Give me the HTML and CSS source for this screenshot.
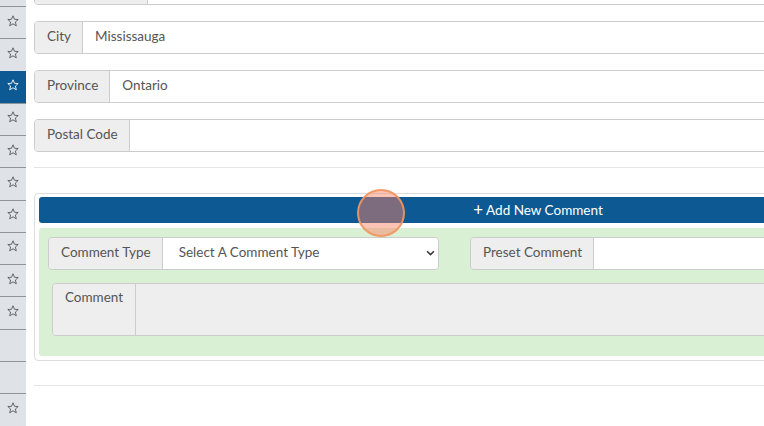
FILE: index.html
```html
<!DOCTYPE html>
<html>
<head>
<meta charset="utf-8">
<link rel="stylesheet" href="styles.css">
</head>
<body>
<div class="page">
  <aside class="sidebar">
    <div class="srow"><svg class="star" viewBox="0 0 12 12"><polygon points="6,0.8 7.5,4.3 11.2,4.5 8.4,7 9.3,10.8 6,8.8 2.7,10.8 3.6,7 0.8,4.5 4.5,4.3"/></svg></div>
    <div class="srow"><svg class="star" viewBox="0 0 12 12"><polygon points="6,0.8 7.5,4.3 11.2,4.5 8.4,7 9.3,10.8 6,8.8 2.7,10.8 3.6,7 0.8,4.5 4.5,4.3"/></svg></div>
    <div class="srow active"><svg class="star" viewBox="0 0 12 12"><polygon points="6,0.8 7.5,4.3 11.2,4.5 8.4,7 9.3,10.8 6,8.8 2.7,10.8 3.6,7 0.8,4.5 4.5,4.3"/></svg></div>
    <div class="srow"><svg class="star" viewBox="0 0 12 12"><polygon points="6,0.8 7.5,4.3 11.2,4.5 8.4,7 9.3,10.8 6,8.8 2.7,10.8 3.6,7 0.8,4.5 4.5,4.3"/></svg></div>
    <div class="srow"><svg class="star" viewBox="0 0 12 12"><polygon points="6,0.8 7.5,4.3 11.2,4.5 8.4,7 9.3,10.8 6,8.8 2.7,10.8 3.6,7 0.8,4.5 4.5,4.3"/></svg></div>
    <div class="srow"><svg class="star" viewBox="0 0 12 12"><polygon points="6,0.8 7.5,4.3 11.2,4.5 8.4,7 9.3,10.8 6,8.8 2.7,10.8 3.6,7 0.8,4.5 4.5,4.3"/></svg></div>
    <div class="srow"><svg class="star" viewBox="0 0 12 12"><polygon points="6,0.8 7.5,4.3 11.2,4.5 8.4,7 9.3,10.8 6,8.8 2.7,10.8 3.6,7 0.8,4.5 4.5,4.3"/></svg></div>
    <div class="srow"><svg class="star" viewBox="0 0 12 12"><polygon points="6,0.8 7.5,4.3 11.2,4.5 8.4,7 9.3,10.8 6,8.8 2.7,10.8 3.6,7 0.8,4.5 4.5,4.3"/></svg></div>
    <div class="srow"><svg class="star" viewBox="0 0 12 12"><polygon points="6,0.8 7.5,4.3 11.2,4.5 8.4,7 9.3,10.8 6,8.8 2.7,10.8 3.6,7 0.8,4.5 4.5,4.3"/></svg></div>
    <div class="srow"><svg class="star" viewBox="0 0 12 12"><polygon points="6,0.8 7.5,4.3 11.2,4.5 8.4,7 9.3,10.8 6,8.8 2.7,10.8 3.6,7 0.8,4.5 4.5,4.3"/></svg></div>
    <div class="srow"></div>
    <div class="srow"></div>
    <div class="srow"><svg class="star" viewBox="0 0 12 12"><polygon points="6,0.8 7.5,4.3 11.2,4.5 8.4,7 9.3,10.8 6,8.8 2.7,10.8 3.6,7 0.8,4.5 4.5,4.3"/></svg></div>
  </aside>

  <main class="main">
    <div class="igroup">
      <span class="addon w-top"></span>
      <div class="field"></div>
    </div>
    <div class="igroup">
      <span class="addon">City</span>
      <div class="field">Mississauga</div>
    </div>
    <div class="igroup">
      <span class="addon">Province</span>
      <div class="field">Ontario</div>
    </div>
    <div class="igroup">
      <span class="addon">Postal Code</span>
      <div class="field"></div>
    </div>

    <hr class="rule rule-a">

    <section class="card">
      <button class="btn-add" type="button"><span class="plus">+</span> Add New Comment</button>
      <div class="green">
        <div class="row">
          <div class="igroup small ctype">
            <span class="addon">Comment Type</span>
            <div class="field select">Select A Comment Type
              <svg class="chev" viewBox="0 0 10 6"><polyline points="1.2,1 5,4.8 8.8,1"/></svg>
            </div>
          </div>
          <div class="igroup small preset">
            <span class="addon">Preset Comment</span>
            <div class="field"></div>
          </div>
        </div>
        <div class="igroup comment">
          <span class="addon top">Comment</span>
          <div class="field area"></div>
        </div>
      </div>
    </section>

    <hr class="rule rule-b">
  </main>
</div>
<div class="cursor"></div>
</body>
</html>
```

FILE: styles.css
```css
html, body {
  margin: 0;
  padding: 0;
  background: #ffffff;
  overflow: hidden;
  width: 764px;
  height: 426px;
}

body {
  font-family: Lato, "Open Sans", Arial, sans-serif;
  font-size: 13.5px;
  color: #555555;
}

.page {
  display: flex;
  align-items: flex-start;
  width: 1100px;
}

.sidebar {
  width: 26px;
  flex: 0 0 26px;
  background: #dfe2e6;
  height: 426px;
  padding-top: 6px;
  box-sizing: border-box;
}

.srow {
  height: 32.25px;
  box-sizing: border-box;
  border-top: 1px solid #8f949b;
  display: flex;
  align-items: center;
  justify-content: center;
  padding-bottom: 4px;
}

.srow.active {
  background: #0d5994;
  border-top-color: #0d5994;
}

.star {
  width: 12px;
  height: 12px;
  fill: none;
  stroke: #555a60;
  stroke-width: 0.9;
  stroke-linejoin: round;
}

.active .star {
  stroke: #ffffff;
}

.main {
  width: 1008px;
  margin-left: 8px;
  margin-top: -28px;
}

.igroup {
  display: flex;
  height: 33px;
  box-sizing: border-box;
  border: 1px solid #cccccc;
  border-radius: 4px;
  margin-bottom: 16px;
  overflow: hidden;
}

.addon {
  background: #eeeeee;
  border-right: 1px solid #cccccc;
  display: flex;
  align-items: center;
  padding: 0 11px 3px 12px;
  white-space: nowrap;
  color: #555555;
}

.w-top {
  width: 89px;
}

.field {
  flex: 1;
  background: #ffffff;
  display: flex;
  align-items: center;
  padding: 0 12px 3px 12px;
  color: #555555;
}

.rule {
  border: 0;
  border-top: 1px solid #e6e6e6;
  margin: 0;
}

.rule-a {
  margin-top: -1px;
  margin-bottom: 25px;
}

.card {
  border: 1px solid #dddddd;
  border-radius: 4px;
  padding: 3px 4px 4px 4px;
  box-sizing: border-box;
}

.btn-add {
  display: block;
  width: 100%;
  height: 26px;
  border: 0;
  border-radius: 3px;
  background: #0d5994;
  color: #ffffff;
  font-family: Lato, "Open Sans", Arial, sans-serif;
  font-size: 13.5px;
  padding: 0 0 3px 0;
  margin: 0 0 5px 0;
}

.plus {
  font-size: 17px;
  position: relative;
  top: 1px;
}

.green {
  background: #d9f0d5;
  border-radius: 3px;
  padding: 9px 9px 20px 9px;
}

.row {
  display: flex;
  gap: 31px;
}

.igroup.small {
  margin-bottom: 13px;
}

.ctype {
  width: 391px;
}

.preset {
  width: 391px;
}

.select {
  position: relative;
  padding-left: 16px;
}

.chev {
  position: absolute;
  right: 3px;
  top: 12px;
  width: 9px;
  height: 6px;
  fill: none;
  stroke: #333333;
  stroke-width: 1.6;
}

.comment {
  height: 53px;
  margin: 0 0 0 4px;
}

.addon.top {
  align-items: flex-start;
  padding: 5px 12px 0 12px;
  width: 58px;
  justify-content: center;
}

.area {
  background: #eeeeee;
}

.rule-b {
  margin-top: 24px;
}

.cursor {
  position: absolute;
  left: 357px;
  top: 189px;
  width: 44px;
  height: 44px;
  border-radius: 50%;
  border: 2px solid rgba(242, 150, 95, 0.9);
  background: rgba(250, 130, 100, 0.47);
}
```
